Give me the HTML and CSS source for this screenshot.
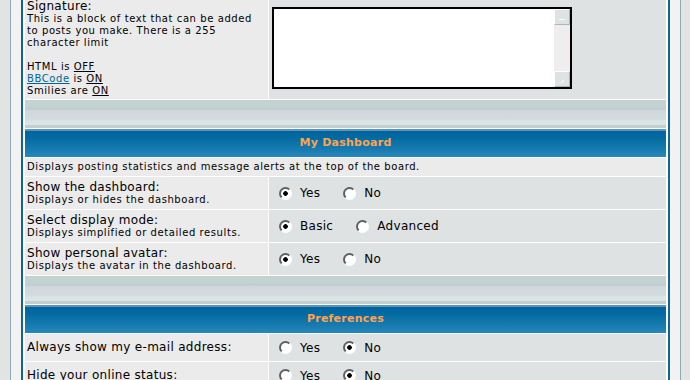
FILE: index.html
```html
<!DOCTYPE html>
<html lang="en">
<head>
  <meta charset="UTF-8">
  <title>Profile - Preferences</title>
  <link rel="stylesheet" href="styles.css">
</head>
<body>
  <div class="frame">
    <div class="forumline">

      <div class="cell row1 sig-label">
        <span class="gen">Signature:</span>
        <span class="gensmall">This is a block of text that can be added to posts you make. There is a 255 character limit<br><br>HTML is <u>OFF</u><br><a href="#">BBCode</a> is <u>ON</u><br>Smilies are <u>ON</u></span>
      </div>
      <div class="cell row2 sig-field">
        <div class="sigbox">
          <textarea class="sigtext" name="signature"></textarea>
          <div class="scrollbar">
            <span class="sb-btn up"></span>
            <span class="sb-btn down"></span>
          </div>
        </div>
      </div>

      <div class="cat-bottom"></div>
      <div class="th">My Dashboard</div>
      <div class="cell row1 wide gensmall">Displays posting statistics and message alerts at the top of the board.</div>

      <div class="cell row1">
        <span class="gen">Show the dashboard:</span>
        <span class="gensmall">Displays or hides the dashboard.</span>
      </div>
      <div class="cell row2 options">
        <label class="choice"><input type="radio" class="radio" name="dash" checked>Yes</label>
        <label class="choice"><input type="radio" class="radio" name="dash">No</label>
      </div>

      <div class="cell row1">
        <span class="gen">Select display mode:</span>
        <span class="gensmall">Displays simplified or detailed results.</span>
      </div>
      <div class="cell row2 options">
        <label class="choice"><input type="radio" class="radio" name="mode" checked>Basic</label>
        <label class="choice"><input type="radio" class="radio" name="mode">Advanced</label>
      </div>

      <div class="cell row1">
        <span class="gen">Show personal avatar:</span>
        <span class="gensmall">Displays the avatar in the dashboard.</span>
      </div>
      <div class="cell row2 options">
        <label class="choice"><input type="radio" class="radio" name="avatar" checked>Yes</label>
        <label class="choice"><input type="radio" class="radio" name="avatar">No</label>
      </div>

      <div class="cat-bottom"></div>
      <div class="th">Preferences</div>

      <div class="cell row1 single">
        <span class="gen">Always show my e-mail address:</span>
      </div>
      <div class="cell row2 options">
        <label class="choice"><input type="radio" class="radio" name="viewemail">Yes</label>
        <label class="choice"><input type="radio" class="radio" name="viewemail" checked>No</label>
      </div>

      <div class="cell row1 single">
        <span class="gen">Hide your online status:</span>
      </div>
      <div class="cell row2 options">
        <label class="choice"><input type="radio" class="radio" name="hideonline">Yes</label>
        <label class="choice"><input type="radio" class="radio" name="hideonline" checked>No</label>
      </div>

    </div>
  </div>
</body>
</html>
```

FILE: styles.css
```css
body {
  margin: 0;
  background: #e2e4e4;
  font-family: "DejaVu Sans", Verdana, sans-serif;
  color: #000;
}

/* page is scrolled a little, so the top of the table sits above the window */
.frame {
  width: 649px;
  margin: -8px 0 0 10px;
  padding: 0 10px 20px;
  background: #f2f2f2;
  border-left: 1px solid #8fa9b6;
  border-right: 1px solid #8fa9b6;
}

.forumline {
  display: grid;
  grid-template-columns: 243px 397px;
  gap: 1px;
  padding: 2px;
  background: #fff;
  border: 2px solid #0f6696;
}

.cell {
  padding: 3px 2px;
}

.sig-label {
  padding: 3px 5px 2px 2px;
}

.row1 {
  background: #ebebeb;
}

.row2 {
  background: #dfe2e2;
}

.wide {
  grid-column: 1 / -1;
}

.single {
  padding: 6px 2px 7px;
}

.gen {
  display: block;
  font-size: 12px;
  line-height: 14px;
  letter-spacing: 0.3px;
}

.gensmall {
  display: block;
  font-size: 10px;
  line-height: 12px;
  letter-spacing: 0.58px;
}

.gensmall a {
  color: #006699;
}

.sig-field {
  display: flex;
  align-items: center;
  padding-left: 3px;
}

.sigbox {
  display: flex;
  width: 296px;
  height: 78px;
  border: 2px solid #000;
  background: #fff;
}

.sigtext {
  flex: 1;
  margin: 0;
  padding: 0;
  border: none;
  resize: none;
  background: #fff;
}

.scrollbar {
  width: 16px;
  display: flex;
  flex-direction: column;
  justify-content: space-between;
  background: #efeded;
}

.sb-btn {
  position: relative;
  display: block;
  height: 16px;
  box-sizing: border-box;
  border: 1px solid #a6b9c2;
  border-top-color: #fff;
  border-left-color: #fff;
  background: #dde3e3;
}

.sb-btn.up::after {
  content: "";
  position: absolute;
  left: 4px;
  bottom: 4px;
  width: 6px;
  height: 1px;
  background: #fff;
}

.sb-btn.down::after {
  content: "";
  position: absolute;
  left: 5px;
  bottom: 4px;
  width: 5px;
  height: 1px;
  background: #fff;
  transform: rotate(-45deg);
}

.cat-bottom {
  grid-column: 1 / -1;
  height: 28px;
  background: linear-gradient(#c5d2d2 0, #c5d2d2 7px, #c1cfd0 7px, #c1cfd0 10px, #cfd6dd 10px, #d3dbdf 19px, #dbe4e4 21px, #dbe4e4 25px, #c3cfcf 25px);
}

.th {
  grid-column: 1 / -1;
  height: 28px;
  line-height: 28px;
  text-align: center;
  font-size: 11px;
  font-weight: bold;
  letter-spacing: 0.25px;
  color: #ffa34f;
  background: linear-gradient(#5a93bd 0, #5a93bd 2px, #00649c 2px, #036aa1 30%, #1478ad 65%, #2687ba 100%);
}

.options {
  display: flex;
  align-items: center;
  padding-left: 10px;
  font-size: 12px;
  letter-spacing: 0.3px;
}

.choice {
  display: flex;
  align-items: center;
  margin-right: 23px;
}

.radio {
  appearance: none;
  box-sizing: border-box;
  width: 13px;
  height: 13px;
  margin: 0 8px 0 0;
  border-radius: 50%;
  border: 2px solid;
  border-color: #5e5e5e #fff #fff #5e5e5e;
  background: #fff;
}

.radio:checked {
  background: radial-gradient(circle, #000 0, #000 2px, #fff 2.6px);
}
```
